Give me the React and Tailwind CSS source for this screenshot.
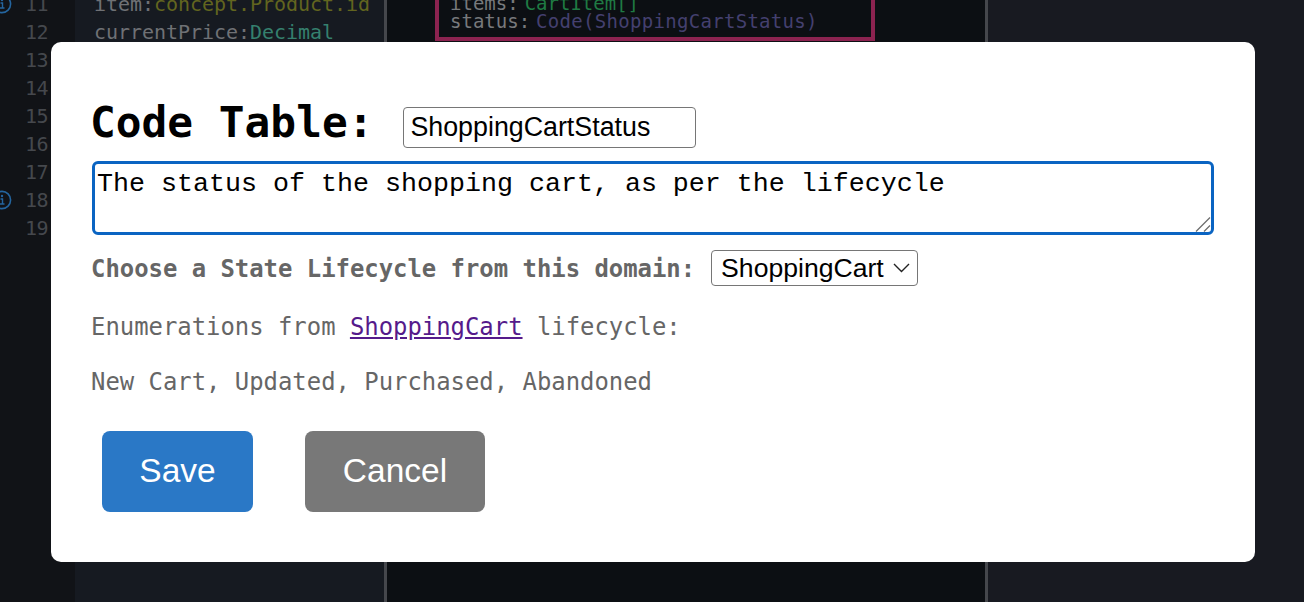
import React from 'react';

const MONO = "font-['DejaVu_Sans_Mono',monospace]";
const SANS = "font-['Liberation_Sans',Arial,sans-serif]";

const lineNumbers = [11, 12, 13, 14, 15, 16, 17, 18, 19];
const infoLines = [11, 18];

const InfoDot = () => (
  <svg width="20" height="20" viewBox="0 0 20 20" className="absolute -left-[8px] top-[4px]">
    <circle cx="10" cy="10" r="8.6" fill="none" stroke="#24659f" strokeWidth="1.6" />
    <circle cx="10" cy="6" r="1.2" fill="#24659f" />
    <path d="M8.5 9h2v5M8 14h4.5" fill="none" stroke="#24659f" strokeWidth="1.4" />
  </svg>
);

const EditorBackground = () => (
  <div className={`flex h-full -mt-[10px] text-[20px] leading-[28px] ${MONO}`}>
    {/* gutter */}
    <div className="w-[75px] shrink-0 bg-[#111317] h-[620px]">
      {lineNumbers.map((n) => (
        <div key={n} className="relative h-[28px] pl-[25px] text-[#45484d] tracking-[-0.5px]">
          {infoLines.includes(n) && <InfoDot />}
          {n}
        </div>
      ))}
    </div>

    {/* code column */}
    <div className="w-[309px] shrink-0 bg-[#161a21] pl-[19px] h-[620px] text-[#6f7175] tracking-[-0.04px]">
      <div>
        item:<span className="text-[#62651f]">concept.Product.id</span>
      </div>
      <div>
        currentPrice:<span className="text-[#35806e]">Decimal</span>
      </div>
    </div>

    <div className="w-[3px] shrink-0 bg-[#45474c] h-[620px]" />

    {/* diagram column */}
    <div className="w-[598px] shrink-0 bg-[#0c0f13] h-[620px] pl-[48px]">
      <div className="w-[440px] h-[51px] border-[4px] border-t-0 border-[#8c2350] pl-[11px] flex flex-col justify-end pb-[7px] text-[19px] leading-[18px] text-[#77797c]">
        <div>
          items:<span className="ml-[6px] text-[#1f7a43]">CartItem[]</span>
        </div>
        <div>
          status:<span className="ml-[6px] text-[#44406f] tracking-[0.3px]">Code(ShoppingCartStatus)</span>
        </div>
      </div>
    </div>

    <div className="w-[3px] shrink-0 bg-[#45474c] h-[620px]" />

    <div className="flex-1 bg-[#181a21] h-[620px]" />
  </div>
);

const CodeTableModal = () => (
  <div className="absolute left-[51px] top-[42px] w-[1204px] h-[520px] bg-white rounded-[10px] px-[41px] pt-[56px]">
    <div className="flex items-start h-[63px] -ml-[2px]">
      <h2 className={`text-[42.8px] leading-[48px] font-bold text-black ${MONO}`}>Code Table:</h2>
      <input
        readOnly
        value="ShoppingCartStatus"
        className={`ml-[30px] mt-[9px] w-[293px] h-[41px] border-[1.5px] border-[#767676] rounded-[4px] px-[6px] text-[26.8px] text-black outline-none ${SANS}`}
      />
    </div>

    <div className="relative">
      <textarea
        readOnly
        defaultValue="The status of the shopping cart, as per the lifecycle"
        className="block w-full h-[74px] border-[3.5px] border-[#0a64c2] rounded-[6px] px-[2px] pt-[5px] text-[26.67px] leading-[30px] text-black font-['Liberation_Mono','Courier_New',monospace] resize-none outline-none"
      />
      {/* resize grip */}
      <svg width="16" height="16" viewBox="0 0 16 16" className="absolute right-[3px] bottom-[3px]">
        <path d="M1 15.5 15 1.5M9 15.5l6-6" fill="none" stroke="#6f6f6f" strokeWidth="1.3" />
      </svg>
    </div>

    <div className="flex items-center mt-[15px] h-[38px]">
      <label className={`-ml-[1px] mt-[2px] text-[23.9px] font-bold text-[#666666] ${MONO}`}>
        Choose a State Lifecycle from this domain:
      </label>
      <div className="relative ml-[16px] -mt-[2px]">
        <select className={`block w-[207px] h-[36px] border-[1.5px] border-[#767676] rounded-[4px] bg-white pl-[9px] text-[26.6px] leading-[30px] text-black appearance-none ${SANS}`}>
          <option>ShoppingCart</option>
        </select>
        <svg width="17" height="10" viewBox="0 0 17 10" className="absolute right-[8px] top-[13px] pointer-events-none">
          <path d="M1 1l7.5 7.5L16 1" fill="none" stroke="#222222" strokeWidth="1.4" />
        </svg>
      </div>
    </div>

    <p className={`-ml-[1px] mt-[23px] text-[23.9px] leading-[32px] text-[#666666] ${MONO}`}>
      Enumerations from{' '}
      <a href="#" className="underline text-[#551a8b]">
        ShoppingCart
      </a>{' '}
      lifecycle:
    </p>

    <p className={`-ml-[1px] mt-[23px] text-[23.9px] leading-[32px] text-[#666666] ${MONO}`}>
      New Cart, Updated, Purchased, Abandoned
    </p>

    <div className={`flex mt-[33px] ml-[10px] gap-[52px] text-[33.5px] text-white ${SANS}`}>
      <button className="w-[151px] h-[81px] rounded-[8px] bg-[#2a78c6]">Save</button>
      <button className="w-[180px] h-[81px] rounded-[8px] bg-[#787878]">Cancel</button>
    </div>
  </div>
);

export default function App() {
  return (
    <div className="relative w-[1304px] h-[602px] overflow-hidden bg-[#111317]">
      <EditorBackground />
      <CodeTableModal />
    </div>
  );
}
